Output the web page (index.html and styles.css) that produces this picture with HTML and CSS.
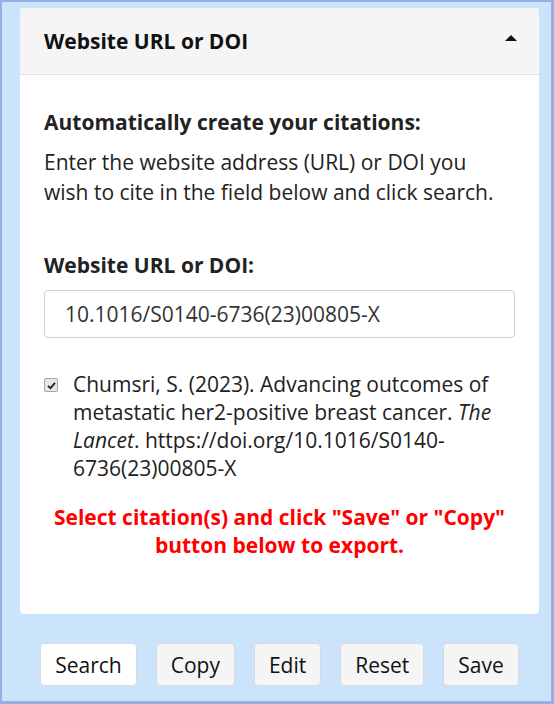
FILE: index.html
```html
<!DOCTYPE html>
<html lang="en">
<head>
  <meta charset="UTF-8">
  <meta name="viewport" content="width=device-width, initial-scale=1.0">
  <title>Citation Generator</title>
  <link rel="stylesheet" href="styles.css">
</head>
<body>
  <div class="frame">
    <div class="panel">
      <div class="panel-heading">
        <h2>Website URL or DOI</h2>
        <span class="caret-up"></span>
      </div>
      <div class="panel-body">
        <h3>Automatically create your citations:</h3>
        <p class="intro">Enter the website address (URL) or DOI you wish to cite in the field below and click search.</p>

        <label class="field-label" for="url">Website URL or DOI:</label>
        <input id="url" class="url-input" type="text" value="10.1016/S0140-6736(23)00805-X">

        <label class="citation">
          <span class="check">
            <svg width="9" height="9" viewBox="0 0 9 9"><path d="M1 4.8 L3.5 7.2 L8 1.8" fill="none" stroke="#222" stroke-width="1.8"/></svg>
          </span>
          <span>Chumsri, S. (2023). Advancing outcomes of metastatic her2-positive breast cancer. <i>The Lancet</i>. https://doi.org/10.1016/S0140-6736(23)00805-X</span>
        </label>

        <p class="notice">Select citation(s) and click "Save" or "Copy" button below to export.</p>
      </div>
    </div>

    <!-- Actions -->
    <div class="actions">
      <button class="btn btn-primary">Search</button>
      <button class="btn">Copy</button>
      <button class="btn">Edit</button>
      <button class="btn">Reset</button>
      <button class="btn">Save</button>
    </div>
  </div>
</body>
</html>
```

FILE: styles.css
```css
html, body {
  margin: 0;
  padding: 0;
  height: 100%;
  overflow: hidden;
}

body {
  font-family: "Open Sans", "Noto Sans", Arial, sans-serif;
  font-size: 21px;
  color: #222;
}

.frame {
  box-sizing: border-box;
  height: 704px;
  background-color: #cce4fb;
  border: 2px solid #93b1e2;
  border-right-width: 3px;
  border-bottom-width: 3px;
  padding: 6px 12px 0 18px;
}

.panel {
  background-color: white;
  border-radius: 4px;
  overflow: hidden;
}

.panel-heading {
  height: 66px;
  background-color: #f5f5f5;
  border-bottom: 1px solid #e3e3e3;
  display: flex;
  align-items: center;
  justify-content: space-between;
  padding: 0 22px 0 24px;
}

.panel-heading h2 {
  margin: 0;
  font-size: 21px;
  font-weight: bold;
  color: #111;
}

.caret-up {
  width: 0;
  height: 0;
  border-left: 6px solid transparent;
  border-right: 6px solid transparent;
  border-bottom: 6px solid #111;
  margin-top: -6px;
}

.panel-body {
  padding: 32px 24px 55px 24px;
}

.panel-body h3 {
  margin: 0 0 10px 0;
  font-size: 21px;
  font-weight: bold;
  line-height: 30px;
}

.intro {
  margin: 0 0 43px 0;
  line-height: 30px;
}

.field-label {
  display: block;
  font-weight: bold;
  line-height: 30px;
  margin-bottom: 10px;
}

.url-input {
  box-sizing: border-box;
  width: 100%;
  height: 48px;
  padding: 0 20px;
  border: 1px solid #d0d0d0;
  border-radius: 4px;
  font-family: inherit;
  font-size: 21px;
  color: #333;
  margin: 0 0 32px 0;
}

.citation {
  display: flex;
  align-items: flex-start;
  line-height: 28px;
}

.check {
  box-sizing: border-box;
  width: 14px;
  height: 14px;
  margin: 8px 15px 0 0;
  flex-shrink: 0;
  border: 1px solid #a8a8a8;
  border-radius: 2px;
  background-color: #e6e6e6;
  display: flex;
  align-items: center;
  justify-content: center;
}

.notice {
  margin: 21px 0 0 0;
  text-align: center;
  color: #ff0000;
  font-weight: bold;
  line-height: 28px;
}

.actions {
  display: flex;
  justify-content: center;
  gap: 19px;
  margin-top: 29px;
}

.btn {
  height: 43px;
  padding: 0 14px;
  font-family: inherit;
  font-size: 21px;
  color: #111;
  background-color: #f5f5f5;
  border: 1px solid #d4dbe3;
  border-radius: 4px;
}

.btn-primary {
  background-color: white;
}
```
